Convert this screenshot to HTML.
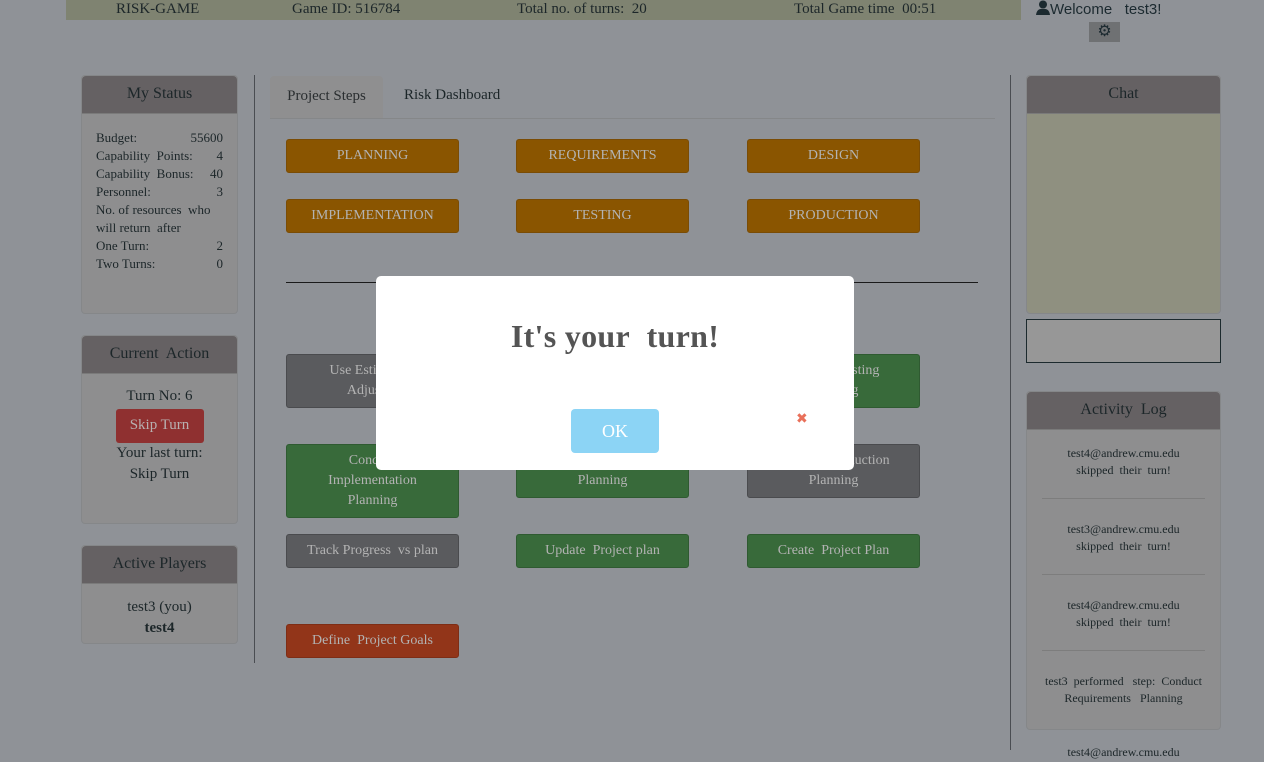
<!DOCTYPE html>
<html><head><meta charset="utf-8"><style>
*{margin:0;padding:0;box-sizing:border-box}
body{width:1264px;height:762px;overflow:hidden;background:#8f9297;font-family:"Liberation Serif",serif;color:#1c2629;position:relative}
.a{position:absolute}
.top{left:66px;top:0;width:955px;height:20px;background:#7f8371;font-size:15px}
.top span{position:absolute;top:1px}
.ph{background:#656163;border-radius:4px 4px 0 0;height:38px;text-align:center;font-size:16px;line-height:36px;border-bottom:1px solid #7a7a7a}
.panel{background:#8e8e8f;border-radius:4px;border:1px solid #858789}
.btn{position:absolute;width:173px;border-radius:3px;text-align:center;font-size:14px;color:#b3b3b3;line-height:20px;display:flex;align-items:center;justify-content:center}
.o{background:#8a5500;border:1px solid #7a4c05}
.g{background:#386a3a;border:1px solid #2f5a31}
.k{background:#5a5b5e;border:1px solid #4a4b4e}
.r{background:#923519;border:1px solid #7e2d15}
.st{font-size:13px;line-height:18px}
.st div{display:flex;justify-content:space-between}
.log{text-align:center;font-size:12px;line-height:17px}
.log>div{margin:0 15px;border-bottom:1px solid #7d7d7d;padding:22px 0 19px}
</style></head><body>
<div class="a top"><span style="left:50px">RISK-GAME</span><span style="left:226px">Game ID: 516784</span><span style="left:451px">Total no. of turns:&nbsp; 20</span><span style="left:728px">Total Game time&nbsp; 00:51</span></div>
<div class="a" style="left:1036px;top:0;font-family:'Liberation Sans',sans-serif;font-size:15px;color:#1c2a30"><svg width="14" height="15" viewBox="0 0 14 15" style="vertical-align:-1px"><circle cx="7" cy="4.5" r="4" fill="#1c2a30"/><path d="M0 15 Q1 8 7 9 Q13 8 14 15Z" fill="#1c2a30"/></svg>Welcome&nbsp;&nbsp; test3!</div>
<div class="a" style="left:1089px;top:22px;width:31px;height:20px;background:#6f7173;text-align:center;font-size:16px;line-height:19px;color:#1c2a30">⚙</div>

<div class="a panel" style="left:81px;top:75px;width:157px;height:239px"><div class="ph">My Status</div>
<div class="st" style="padding:15px 14px 0 14px"><div><span>Budget:</span><span>55600</span></div><div><span>Capability&nbsp; Points:</span><span>4</span></div><div><span>Capability&nbsp; Bonus:</span><span>40</span></div><div><span>Personnel:</span><span>3</span></div><div><span>No. of resources&nbsp; who</span></div><div><span>will return&nbsp; after</span></div><div><span>One Turn:</span><span>2</span></div><div><span>Two Turns:</span><span>0</span></div></div></div>
<div class="a panel" style="left:81px;top:335px;width:157px;height:189px"><div class="ph">Current&nbsp; Action</div>
<div style="text-align:center;font-size:15px;line-height:21px;padding-top:12px">Turn No: 6<div style="margin:2px auto 0;width:88px;height:34px;background:#8f3030;border-radius:3px;color:#b8b0b0;line-height:32px">Skip Turn</div>Your last turn:<br>Skip Turn</div></div>
<div class="a panel" style="left:81px;top:545px;width:157px;height:99px"><div class="ph">Active Players</div>
<div style="text-align:center;font-size:15px;line-height:21px;padding-top:13px">test3 (you)<br><b>test4</b></div></div>

<div class="a" style="left:254px;top:75px;width:1px;height:588px;background:#4a4d52"></div>
<div class="a" style="left:1010px;top:75px;width:1px;height:675px;background:#4a4d52"></div>

<div class="a" style="left:270px;top:76px;width:113px;height:42px;background:#8f8f90;border-radius:4px 4px 0 0;font-size:15px;text-align:center;line-height:40px;color:#2a2e30">Project Steps</div>
<div class="a" style="left:404px;top:87px;font-size:15px">Risk Dashboard</div>
<div class="a" style="left:270px;top:118px;width:725px;height:1px;background:#858789"></div>

<div class="btn o" style="left:286px;top:139px;height:34px">PLANNING</div>
<div class="btn o" style="left:516px;top:139px;height:34px">REQUIREMENTS</div>
<div class="btn o" style="left:747px;top:139px;height:34px">DESIGN</div>
<div class="btn o" style="left:286px;top:199px;height:34px">IMPLEMENTATION</div>
<div class="btn o" style="left:516px;top:199px;height:34px">TESTING</div>
<div class="btn o" style="left:747px;top:199px;height:34px">PRODUCTION</div>
<div class="a" style="left:286px;top:282px;width:692px;height:1px;background:#1a1a1a"></div>

<div class="btn k" style="left:286px;top:354px;height:54px">Use Estimating<br>Adjust ...</div>
<div class="btn g" style="left:747px;top:354px;height:54px">Conduct Testing<br>Planning</div>
<div class="btn g" style="left:286px;top:444px;height:74px">Conduct<br>Implementation<br>Planning</div>
<div class="btn g" style="left:516px;top:444px;height:54px">Conduct Design<br>Planning</div>
<div class="btn k" style="left:747px;top:444px;height:54px">Conduct Production<br>Planning</div>
<div class="btn k" style="left:286px;top:534px;height:34px">Track Progress&nbsp; vs plan</div>
<div class="btn g" style="left:516px;top:534px;height:34px">Update&nbsp; Project plan</div>
<div class="btn g" style="left:747px;top:534px;height:34px">Create&nbsp; Project Plan</div>
<div class="btn r" style="left:286px;top:624px;height:34px">Define&nbsp; Project Goals</div>

<div class="a panel" style="left:1026px;top:75px;width:195px;height:239px"><div class="ph">Chat</div><div style="background:#8f9080;height:199px;border-radius:0 0 4px 4px"></div></div>
<div class="a" style="left:1026px;top:319px;width:195px;height:44px;background:#979797;border:1px solid #1c2a2e"></div>
<div class="a panel" style="left:1026px;top:391px;width:195px;height:339px"><div class="ph">Activity&nbsp; Log</div>
<div class="log">
<div style="padding-top:15px">test4@andrew.cmu.edu<br>skipped&nbsp; their&nbsp; turn!</div>
<div>test3@andrew.cmu.edu<br>skipped&nbsp; their&nbsp; turn!</div>
<div>test4@andrew.cmu.edu<br>skipped&nbsp; their&nbsp; turn!</div>
<div style="margin:0;border:0">test3&nbsp; performed&nbsp;&nbsp; step:&nbsp; Conduct<br>Requirements&nbsp;&nbsp; Planning</div>
</div></div>
<div class="a log" style="left:1026px;top:744px;width:195px">test4@andrew.cmu.edu</div>

<div class="a" style="left:376px;top:276px;width:478px;height:194px;background:#fff;border-radius:5px">
<div style="position:absolute;top:42px;width:100%;text-align:center;font-size:32px;font-weight:bold;color:#545454;letter-spacing:0.3px">It's your&nbsp; turn!</div>
<div style="position:absolute;left:195px;top:133px;width:88px;height:44px;background:#8cd4f5;border-radius:4px;color:#fff;font-size:18px;text-align:center;line-height:44px">OK</div>
<div style="position:absolute;left:420px;top:135px;color:#e9705a;font-size:14px;font-weight:bold;font-family:'DejaVu Sans',sans-serif">✖</div>
</div>
</body></html>
